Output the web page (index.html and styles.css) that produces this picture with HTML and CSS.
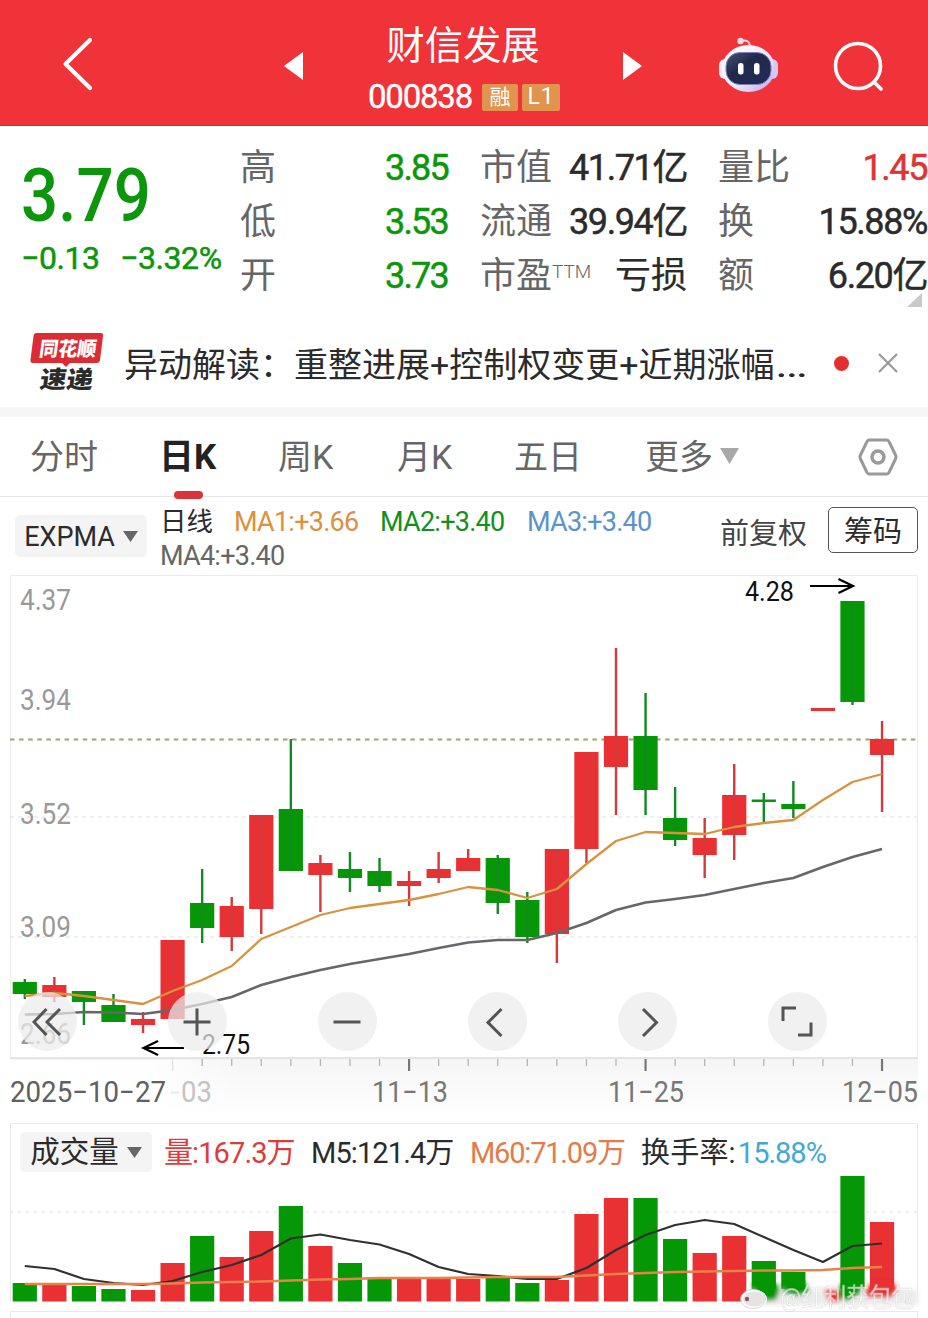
FILE: index.html
```html
<!DOCTYPE html>
<html lang="zh-CN">
<head>
<meta charset="utf-8">
<title>财信发展 000838</title>
<link rel="stylesheet" href="styles.css">
</head>
<body>
<header class="topbar">
  <svg class="back" width="32" height="54" viewBox="0 0 32 54"><path d="M29 3 4.500 27 29 51" fill="none" stroke="#fff" stroke-width="4.200" stroke-linecap="round" stroke-linejoin="round"/></svg>
  <svg class="prev" width="19" height="28" viewBox="0 0 19 28"><path d="M19 0V28L0 14Z" fill="#fff"/></svg>
  <div class="stock">
    <h1>财信发展</h1>
    <div class="code"><span class="digits">000838</span><span class="badge">融</span><span class="badge l1">L1</span></div>
  </div>
  <svg class="next" width="19" height="28" viewBox="0 0 19 28"><path d="M0 0V28L19 14Z" fill="#fff"/></svg>
  <svg class="robot" width="60" height="56" viewBox="0 0 60 56">
    <defs>
      <linearGradient id="shell" x1="0" y1="0" x2="1" y2="1"><stop offset="0" stop-color="#fff"/><stop offset=".55" stop-color="#f3e9fa"/><stop offset="1" stop-color="#b9a5ec"/></linearGradient>
      <linearGradient id="visor" x1="0" y1="0" x2="1" y2="1"><stop offset="0" stop-color="#485273"/><stop offset=".4" stop-color="#20294c"/><stop offset="1" stop-color="#252b5b"/></linearGradient>
    </defs>
    <path d="M23 4Q32 2 32 10" fill="none" stroke="#fbd9e3" stroke-width="2"/>
    <circle cx="22.500" cy="4" r="3.200" fill="#fbdce4"/>
    <rect x="1" y="22" width="12" height="20" rx="6" fill="#f1e9fc"/>
    <rect x="48" y="22" width="12" height="20" rx="6" fill="#d3c9f8"/>
    <ellipse cx="30.500" cy="31.500" rx="26.500" ry="23.500" fill="url(#shell)"/>
    <rect x="8" y="15.500" width="45" height="32" rx="14" fill="url(#visor)" stroke="#7b83bd" stroke-width="1"/>
    <rect x="20" y="26" width="5.500" height="11.500" rx="2.500" fill="#fff"/>
    <rect x="36" y="26" width="5.500" height="11.500" rx="2.500" fill="#fff"/>
  </svg>
  <svg class="search" width="52" height="52" viewBox="0 0 52 52"><g fill="none" stroke="#fff" stroke-width="3.600" stroke-linecap="round"><circle cx="25" cy="25" r="22.500"/><path d="M41 41 48 48"/></g></svg>
</header>

<section class="quote">
  <div class="price">
    <div class="last">3.79</div>
    <div class="change"><span>−0.13</span><span>−3.32%</span></div>
  </div>
  <dl class="stats">
    <dt>高</dt><dd class="down">3.85</dd><dt>市值</dt><dd>41.71亿</dd><dt>量比</dt><dd class="up">1.45</dd>
    <dt>低</dt><dd class="down">3.53</dd><dt>流通</dt><dd>39.94亿</dd><dt>换</dt><dd>15.88%</dd>
    <dt>开</dt><dd class="down">3.73</dd><dt>市盈<sup>TTM</sup></dt><dd class="cn">亏损</dd><dt>额</dt><dd>6.20亿</dd>
  </dl>
  <svg class="corner" width="15" height="14" viewBox="0 0 15 14"><path d="M15 0V14H0Z" fill="#c9c9c9"/></svg>
</section>

<section class="news">
  <svg class="logo" width="74" height="62" viewBox="0 0 74 62">
    <path d="M6.500 1H70.500Q73.500 1 73 4L70 28Q69.500 31 66.500 31H40L36 35 32 31H3Q0 31 .500 28L3.500 4Q4 1 6.500 1Z" fill="#dc2b33"/>
    <g transform="skewX(-8)"><text x="12" y="24" class="logo-a" textLength="57" lengthAdjust="spacingAndGlyphs">同花顺</text>
    <text x="17" y="56" class="logo-b" textLength="53" lengthAdjust="spacingAndGlyphs">速递</text></g>
  </svg>
  <p>异动解读：重整进展+控制权变更+近期涨幅<span class="more">…</span></p>
  <i class="dot"></i>
  <svg class="close" width="22" height="22" viewBox="0 0 22 22"><path d="M2 2 20 20M20 2 2 20" stroke="#999" stroke-width="2.200"/></svg>
</section>

<nav class="tabs">
  <a class="t1">分时</a><a class="t2 active">日K</a><a class="t3">周K</a><a class="t4">月K</a><a class="t5">五日</a>
  <a class="t6">更多<svg width="19" height="16" viewBox="0 0 19 16"><path d="M0 0H19L9.500 16Z" fill="#a8a8a8"/></svg></a>
  <svg class="gear" width="40" height="38" viewBox="0 0 40 38"><g fill="none" stroke="#999" stroke-width="3"><path d="M11.500 2H28.500Q30 2 31 3.500L37.500 17Q38.500 19 37.500 21L31 34.500Q30 36 28.500 36H11.500Q10 36 9 34.500L2.500 21Q1.500 19 2.500 17L9 3.500Q10 2 11.500 2Z"/><circle cx="20" cy="19" r="6" stroke-width="3.400"/></g></svg>
</nav>

<section class="indicator">
  <button class="picker">EXPMA<svg width="15" height="11" viewBox="0 0 15 11"><path d="M0 0H15L7.500 11Z" fill="#666"/></svg></button>
  <div class="ma">
    <div><span class="name">日线</span><span class="ma1">MA1:+3.66</span><span class="ma2">MA2:+3.40</span><span class="ma3">MA3:+3.40</span></div>
    <div class="ma4">MA4:+3.40</div>
  </div>
  <span class="adjust">前复权</span>
  <button class="chips">筹码</button>
</section>

<section class="kline">
  <svg id="kline" width="928" height="548" viewBox="0 575 928 548"></svg>
  <div class="tools">
    <button><svg width="30" height="30" viewBox="0 0 30 30"><path d="M14.500 2 2 15 14.500 28M28 2 15 15 28 28"/></svg></button>
    <button><svg width="30" height="30" viewBox="0 0 30 30"><path d="M15 1.500V28.500M1.500 15H28.500"/></svg></button>
    <button><svg width="30" height="30" viewBox="0 0 30 30"><path d="M1.500 15H28.500"/></svg></button>
    <button><svg width="30" height="30" viewBox="0 0 30 30"><path d="M19.500 2 6 15.500 19.500 29"/></svg></button>
    <button><svg width="30" height="30" viewBox="0 0 30 30"><path d="M11 2 24.500 15.500 11 29"/></svg></button>
    <button><svg width="32" height="32" viewBox="0 0 32 32"><path d="M2 15V2H15M30 16.500V29H17"/></svg></button>
  </div>
</section>

<section class="volume">
  <div class="vol-head">
    <button class="picker">成交量<svg width="15" height="11" viewBox="0 0 15 11"><path d="M0 0H15L7.500 11Z" fill="#666"/></svg></button>
    <span class="v1">量:167.3万</span><span class="v2">M5:121.4万</span><span class="v3">M60:71.09万</span><span class="v4">换手率:<b>15.88%</b></span>
  </div>
  <svg id="volume" width="928" height="143" viewBox="0 1175 928 143"></svg>
</section>
<script src="chart.js"></script>
</body>
</html>
```
FILE: styles.css
```css
* { box-sizing: border-box; }
body { margin: 0; width: 928px; height: 1318px; overflow: hidden; background: #fff; color: #2b2b2b; font-family: Roboto, "Noto Sans CJK SC", sans-serif; }
button { border: 0; padding: 0; font: inherit; color: inherit; }
svg { display: block; flex: none; }
h1, p, dl, dd { margin: 0; }

.topbar { height: 126px; background: #f03239; border-bottom: 1px solid #8f4a4c; display: flex; color: #fff; }
.back { margin: 37px 0 0 61px; }
.prev { margin: 52px 0 0 191px; }
.stock { width: 320px; height: 125px; padding-top: 20px; display: flex; flex-direction: column; align-items: center; }
.stock h1 { font-size: 38.3px; line-height: 52px; font-weight: 400; }
.code { display: flex; align-items: center; height: 50px; }
.digits { font-size: 33px; letter-spacing: -1.2px; line-height: 50px; margin-right: 10px; -webkit-text-stroke: .4px; margin-left: 2px; }
.badge { width: 36px; height: 27px; background: #e0944d; border-radius: 2px; font-size: 21px; line-height: 26px; text-align: center; margin-right: 4px; }
.badge.l1 { width: 38px; margin-right: 0; font-size: 23px; letter-spacing: 1px; }
.next { margin: 52px 0 0 0; }
.robot { margin: 37px 0 0 76px; }
.search { margin: 41px 0 0 55px; }

.quote { position: relative; height: 199px; display: flex; padding-top: 15px; }
.price { width: 240px; padding-left: 21px; color: #0b960b; }
.last { margin-top: 15px; font-size: 74px; line-height: 80px; font-weight: 500; transform: scaleX(.885); transform-origin: left; }
.change { display: flex; font-size: 32px; line-height: 44px; letter-spacing: -.4px; -webkit-text-stroke: .5px; }
.change span { width: 99px; }
.stats { width: 688px; display: grid; grid-template-columns: 105px 105px 80px 158px 110px 130px; grid-template-rows: repeat(3, 54px); font-size: 36px; line-height: 54px; white-space: nowrap; }
.stats dt { color: #666; }
.stats dt:nth-of-type(3n+2), .stats dt:nth-of-type(3n) { margin-left: 30px; }
.stats dd { text-align: right; letter-spacing: -1.4px; padding-right: 1px; -webkit-text-stroke: .5px; }
.stats dd.cn { letter-spacing: 0; -webkit-text-stroke: .2px; }
.stats dd.down { color: #0b960b; padding-right: 2px; letter-spacing: -1.8px; }
.stats dd.up { color: #dc3535; }
.stats sup { font-size: 19px; line-height: 0; vertical-align: 10px; font-weight: 300; }
.corner { position: absolute; left: 907px; top: 167px; }

.news { height: 82px; display: flex; align-items: center; padding-left: 30px; }
.logo { margin: -6px 20px 0 0; }
.logo-a { font: 900 20px "Noto Sans CJK SC", sans-serif; fill: #fff; }
.logo-b { font: 900 24px "Noto Sans CJK SC", sans-serif; fill: #2b2b2b; }
.news p { width: 697px; font-size: 34px; line-height: 50px; margin-top: -3px; white-space: nowrap; }
.more { display: inline-block; transform: scaleX(1.45); transform-origin: left; }
.dot { width: 15px; height: 15px; border-radius: 50%; background: #e3302f; margin: -6px 0 0 13px; }
.close { margin: -6px 0 0 28px; }

.tabs { position: relative; height: 90px; border-top: 10px solid #f6f6f6; border-bottom: 1px solid #e6e6e6; display: grid; grid-template-columns: 130px 118px 119px 117px 131px 213px 70px; padding-left: 30px; font-size: 34px; line-height: 81px; color: #666; }
.tabs .active { color: #222; font-weight: 700; position: relative; font-size: 35px; left: -1px; }
.tabs .active::after { content: ""; position: absolute; left: 15px; bottom: -1px; width: 29px; height: 8px; border-radius: 4px; background: #dc3338; }
.t6 { display: flex; align-items: center; gap: 7px; }
.t6 svg { margin-top: -3px; }
.gear { margin-top: 21px; }

.indicator { height: 78px; display: flex; padding-left: 15px; }
.picker { width: 132px; height: 42px; border-radius: 5px; background: #f4f4f4; display: flex; align-items: center; justify-content: center; gap: 8px; font-size: 27px; line-height: 42px; }
.indicator .picker { margin-top: 18px; padding-top: 1px; }
.ma { width: 560px; padding: 8px 0 0 13px; font-size: 27px; line-height: 34px; letter-spacing: -.75px; white-space: nowrap; }
.ma > div { display: flex; }
.ma .name { width: 74px; font-size: 26.500px; letter-spacing: 0; }
.ma1 { width: 146px; color: #dc9140; }
.ma2 { width: 147px; color: #12901b; }
.ma3 { color: #5b94c9; }
.ma4 { color: #666; }
.adjust { width: 121px; padding-left: 13px; font-size: 29px; line-height: 74px; color: #444; white-space: nowrap; }
.chips { width: 90px; height: 46px; margin-top: 10px; border: 1.500px solid #555; border-radius: 5px; background: #fff; font-size: 29px; line-height: 42px; padding-top: 3px; }

.kline { position: relative; height: 548px; }
.tools { position: absolute; left: 17.500px; top: 417px; display: flex; gap: 91px; }
.tools button { width: 59px; height: 59px; border-radius: 50%; background: rgba(235, 235, 235, .72); display: flex; align-items: center; justify-content: center; }
.tools path { fill: none; stroke: #555; stroke-width: 3; }
.axis { font-family: Roboto, sans-serif; font-size: 29px; }
.note { font-family: Roboto, sans-serif; font-size: 27px; }

.volume { height: 195px; }
.vol-head { height: 52px; margin: 0 10px; border: 1px solid #e9e9e9; border-bottom: 0; padding: 8px 0 0 9px; display: flex; font-size: 29px; line-height: 43px; letter-spacing: -.9px; white-space: nowrap; }
.vol-head .picker { height: 40px; font-size: 29.500px; letter-spacing: 0; gap: 8px; margin-right: 12px; }
.v1 { width: 147px; color: #dc3c3c; }
.v2 { width: 159px; }
.v3 { width: 171px; color: #e27c4a; letter-spacing: -1.2px; }
.v4 { letter-spacing: .2px; }
.v4 b { font-weight: 400; color: #43a8d3; letter-spacing: -1px; margin-left: 2px; }
.mark { font: 26px "Noto Sans CJK SC", sans-serif; fill: #fff; stroke: #d6d6d6; stroke-width: .6px; }
```
FILE: chart.js
```js
const RED = '#e93033', GREEN = '#059705', X0 = 24.8, STEP = 29.56;
const x = i => X0 + STEP * i;

// colour, body top, body bottom, wick top, wick bottom
const candles = [
  ['g',982,994,979,999],['r',985,997,977,1002],['g',991,1002,991,1025],['g',1005,1022,994,1022],['r',1019,1025,1012,1033],
  ['r',940,1019,940,1019],['g',903,928,869,943],['r',906,937,897,951],['r',815,909,815,934],['g',809,871,739,871],
  ['r',863,875,855,912],['g',869,878,852,892],['g',871,886,858,892],['r',881,886,871,906],['r',869,878,852,883],
  ['r',858,871,849,871],['g',858,903,855,914],['g',900,937,892,943],['r',849,934,849,963],['r',752,849,752,863],
  ['r',736,767,648,815],['g',736,790,693,815],['g',818,840,787,846],['r',838,855,818,878],['r',795,835,764,860],
  ['g',799.5,802,793,822],['g',804,809,781,818],['r',708,711,708,711],['g',601,702,601,705],['r',739,755,721,812]
];
const fast = [996,993,996,1000,1004,991,980,966,939,927,915,908,904,900,894,887,890,898,889,864,841,832,833,834,827,823,820,800,782,774];
const slow = [1014.5,1014,1012,1012.5,1014,1010,1004,997,985,977,970,964,959,954,948,942.5,940,940,933,923,910,902.5,899,895,889,883,878,867,857,849];
const volumes = [1283,1285,1286,1289,1290,1263,1236,1257,1231,1206,1246,1263,1278,1279,1279,1279,1278,1283,1280,1214,1198,1198,1239,1253,1236,1261,1272,1290,1176,1222];
const m5 = [1266,1269,1279,1283,1285,1281,1272,1265,1255,1238.5,1234.5,1240,1244.5,1254,1267,1274,1276,1279,1279,1268,1250,1235,1225,1220,1224,1237,1250,1262,1246,1243.5];
const m60 = [1284,1284,1284,1284,1284,1283.5,1282.5,1282,1281.5,1280.5,1279.5,1279,1278,1278,1278,1277.5,1277,1277,1277,1275.5,1274,1273,1272,1271.5,1271,1270.5,1270.5,1270,1268,1267];

const line = (d, c, w) => `<polyline points="${d.map((y, i) => x(i) + ',' + y).join(' ')}" fill="none" stroke="${c}" stroke-width="${w}" stroke-linejoin="round"/>`;
const label = (t, lx, y, w, fill, cls = 'axis', extra = '') => `<text x="${lx}" y="${y}" class="${cls}" fill="${fill}" textLength="${w}" lengthAdjust="spacingAndGlyphs" ${extra}>${t}</text>`;
const rule = (y, c = '#dedede', dash = '4 4') => `<path d="M10 ${y}H917" stroke="${c}" stroke-dasharray="${dash}"/>`;

let k = `<defs><linearGradient id="fade" x1="0" y1="0" x2="0" y2="1"><stop offset="0" stop-color="#f5f5f5"/><stop offset="1" stop-color="#fefefe"/></linearGradient>
<linearGradient id="cover"><stop offset="0" stop-color="#fff"/><stop offset=".6" stop-color="#fff" stop-opacity=".9"/><stop offset="1" stop-color="#fff" stop-opacity="0"/></linearGradient></defs>
<rect x="10" y="1058" width="908" height="55" fill="url(#fade)"/><rect x="10" y="1060" width="230" height="60" fill="url(#cover)"/>
<path d="M10.500 1058V575.500H917.500V1058" fill="none" stroke="#ebebeb"/><path d="M10 1058H918" stroke="#e4e4e4" stroke-width="2"/>`;
k += rule(817) + rule(937) + `<path d="M10 739.500H917" stroke="#a0a36f" stroke-width="1.800" stroke-dasharray="4.500 4.600"/>`;
k += label('4.37', 20, 610, 51, '#999') + label('3.94', 20, 710, 51, '#999') + label('3.52', 20, 824, 51, '#999') + label('3.09', 20, 937, 51, '#999') + label('2.66', 20, 1044, 51, '#999');
for (const [i, [c, t, b, h, l]] of candles.entries()) {
  const f = c === 'r' ? RED : GREEN;
  k += `<rect x="${x(i) - 12.1}" y="${t}" width="24.200" height="${b - t}" fill="${f}"/><rect x="${x(i) - 1.2}" y="${h}" width="2.400" height="${l - h}" fill="${c === 'r' ? '#d23a3e' : '#128a22'}"/>`;
}
k += line(slow, '#66676a', 2.6) + line(fast, '#d9923f', 2.3);
k += label('4.28', 745, 601, 49, '#111', 'note') + label('2.75', 202, 1054, 48, '#111', 'note');
k += `<g fill="none" stroke="#000" stroke-width="2.200"><path d="M810 586H852M838.500 579 853 586 838.500 593"/><path d="M184 1048H144M158 1041 143.500 1048 158 1055"/></g>`;
for (let i = 5; i < 30; i++) {
  const major = [13, 21, 29].includes(i);
  k += `<path d="M${x(i)} 1059V${major || i === 5 ? 1071 : 1066}" stroke="${i === 5 ? '#e0e0e0' : major ? '#777' : '#b5b5b5'}" stroke-width="${major ? 2.2 : 1.3}"/>`;
}
k += label('03', 181, 1102, 31, '#c4c4c4') + `<path d="M171 1092.500H179" stroke="#eaeaea" stroke-width="2"/>`;
k += label('2025−10−27', 10, 1102, 156, '#606060') + label('11−13', 372, 1102, 76, '#777') + label('11−25', 608, 1102, 76, '#777') + label('12−05', 842, 1102, 76, '#777');
document.getElementById('kline').innerHTML = k;

let v = `<defs><filter id="soft" x="-20%" y="-50%" width="140%" height="200%"><feGaussianBlur stdDeviation="2.200"/></filter></defs>
<path d="M10.500 1175V1302M917.500 1175V1302M10 1311.500H918M10.500 1311V1318M917.500 1311V1318" fill="none" stroke="#e9e9e9"/>` + rule(1212, '#dedede', '3 5');
for (const [i, t] of volumes.entries()) {
  if (i === 27) continue;
  const end = i < 25 ? 1301.5 : 1289;
  v += `<rect x="${x(i) - 12.1}" y="${t}" width="24.200" height="${end - t}" fill="${candles[i][0] === 'r' ? RED : GREEN}"/>`;
}
v += `<g filter="url(#soft)"><path d="M748 1290H918V1305H748Z" fill="#ececec"/>
<path d="M752 1283H776L780 1290 776 1300 766 1301 754 1292ZM782 1283H806L810 1293 797 1296 784 1293Z" fill="${GREEN}"/>
<path d="M841 1283H864L860 1294 848 1301 836 1297Z" fill="${GREEN}"/><path d="M824 1289 838 1291 840 1302 829 1302ZM871 1283H894L898 1291 890 1298 866 1297 865 1291Z" fill="${RED}"/></g>`;
v += label('@红利获包包', 780, 1307, 134, '#fff', 'mark', 'opacity=".7"');
v += `<ellipse cx="754" cy="1299" rx="12" ry="8.500" fill="#e6e3e3" stroke="#fff" stroke-width="2"/><ellipse cx="753" cy="1299" rx="12.500" ry="9.500" fill="none" stroke="#ccc" stroke-width=".8"/><circle cx="747" cy="1299" r="2.200" fill="#8b5a5a"/>`;
v += line(m5, '#303030', 2.2) + line(m60, '#ea804a', 2.4);
document.getElementById('volume').innerHTML = v;
```
